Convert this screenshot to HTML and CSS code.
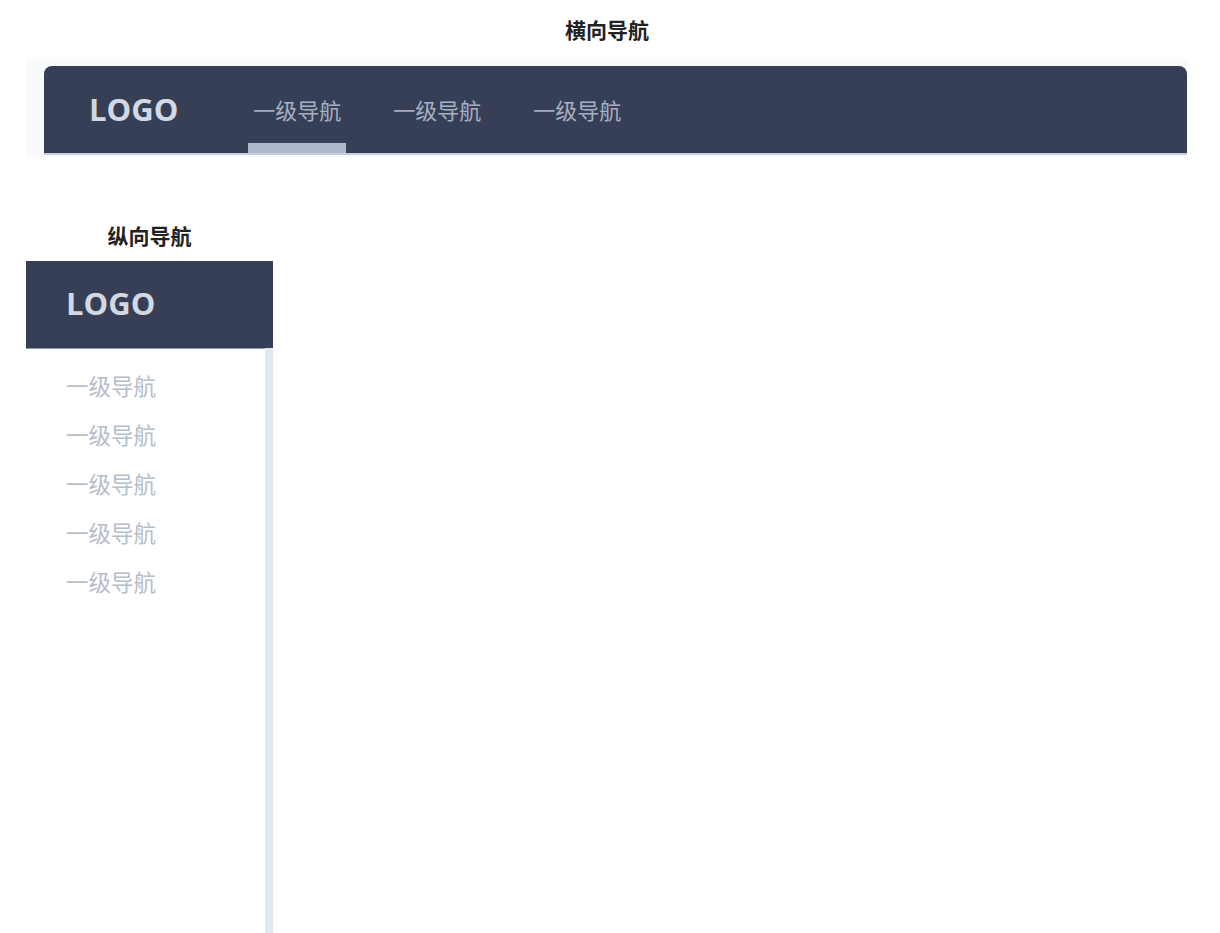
FILE: index.html
```html
<!DOCTYPE html>
<html>
<head>
<meta charset="utf-8">
<title>导航</title>
<link rel="stylesheet" href="styles.css">
</head>
<body>
<h3 class="title title-top">横向导航</h3>
<div class="hnav-wrap">
  <div class="hnav">
    <div class="logo">LOGO</div>
    <ul class="hnav-list">
      <li class="active">一级导航</li>
      <li>一级导航</li>
      <li>一级导航</li>
    </ul>
  </div>
</div>

<div class="side-area">
  <h3 class="title title-side">纵向导航</h3>
  <div class="sidebar">
    <div class="side-head">
      <div class="logo">LOGO</div>
    </div>
    <ul class="vnav-list">
      <li>一级导航</li>
      <li>一级导航</li>
      <li>一级导航</li>
      <li>一级导航</li>
      <li>一级导航</li>
    </ul>
  </div>
</div>
</body>
</html>
```
FILE: styles.css
```css
body{
  margin: 0;
  background: #fff;
  font-family: "Noto Sans CJK SC", "Noto Sans", sans-serif;
}
ul{
  list-style: none;
  margin: 0;
  padding: 0;
}
.title{
  margin: 0;
  font-size: 21px;
  font-weight: bold;
  color: #222;
  text-align: center;
  line-height: 28px;
}
.title-top{
  padding-top: 15px;
  padding-right: 6px;
}
.hnav-wrap{
  margin: 16px 0 0 26px;
  width: 1161px;
  padding: 7px 0 4px 18px;
  box-sizing: border-box;
  background: #f9fafc;
}
.hnav{
  display: flex;
  align-items: stretch;
  height: 87px;
  background: #363f55;
  border-radius: 8px 8px 0 0;
  box-shadow: 0 2px 0 #c9cfdb;
  padding-left: 45px;
}
.logo{
  font-family: "Open Sans", "Noto Sans", sans-serif;
  font-weight: bold;
  font-size: 31px;
  color: #d4d8e2;
}
.hnav .logo{
  line-height: 87px;
  margin-right: 70px;
}
.hnav-list{
  display: flex;
  gap: 42px;
}
.hnav-list li{
  width: 98px;
  text-align: center;
  font-size: 22px;
  line-height: 87px;
  color: #a7b0c3;
}
.hnav-list li.active{
  box-shadow: inset 0 -10px 0 #b0b9cc;
}
.side-area{
  width: 247px;
  margin: 64px 0 0 26px;
}
.title-side{
  padding-bottom: 12px;
}
.sidebar{
  height: 700px;
  display: flex;
  flex-direction: column;
}
.side-head{
  height: 87px;
  background: #363f55;
  padding-left: 40px;
  box-shadow: 0 1px 0 #8f98ab;
}
.side-head .logo{
  line-height: 84px;
}
.vnav-list{
  flex: 1;
  border-right: 8px solid #e3e7ef;
  padding: 13px 0 0 40px;
}
.vnav-list li{
  font-size: 22.5px;
  line-height: 49px;
  color: #b6bdcb;
}
```
